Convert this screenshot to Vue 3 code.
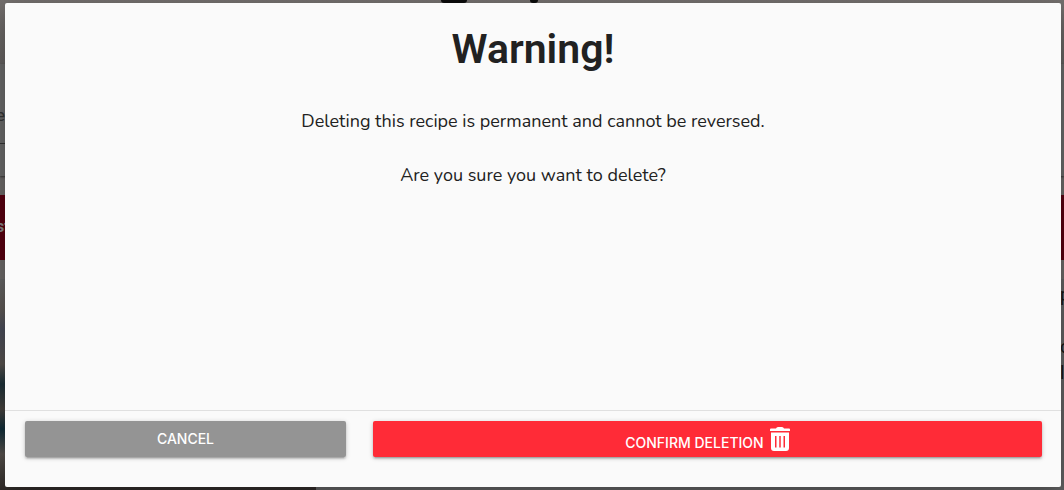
<script setup>
const title = 'Warning!'
</script>

<template>
  <div class="screen">
    <div class="page" aria-hidden="true">
      <header class="masthead">
        <span class="ink wide"></span>
        <span class="ink dot"></span>
      </header>
      <div class="search"><span>e</span></div>
      <div class="banner"><span>st</span></div>
      <div class="recipe">
        <div class="photo"></div>
        <div class="details">
          <div class="lines"><span>p</span><span class="later">c</span><span>l</span></div>
        </div>
      </div>
    </div>

    <div class="modal" role="dialog" aria-modal="true" aria-labelledby="modal-title">
      <div class="content">
        <h1 id="modal-title">{{ title }}</h1>
        <p>Deleting this recipe is permanent and cannot be reversed.</p>
        <p>Are you sure you want to delete?</p>
      </div>
      <footer class="actions">
        <button class="btn cancel" type="button">Cancel</button>
        <button class="btn confirm" type="button">
          <span>Confirm Deletion</span>
          <svg class="trash" viewBox="0 0 20 24" aria-hidden="true">
            <path fill="#fff" fill-rule="evenodd" d="M1 1.500h5Q6.500 0 8 0h4q1.500 0 2 1.500h5q1 0 1 1V4H0V2.500q0-1 1-1zM1 5.500h18V21q0 3-3 3H4q-3 0-3-3zM5 9v11.500h1.500V9zm4.250 0v11.500h1.500V9zm4.250 0v11.500H15V9z" />
          </svg>
        </button>
      </footer>
    </div>
  </div>
</template>

<style>
body {
  margin: 0;
}
</style>

<style scoped>
.screen {
  position: relative;
  box-sizing: border-box;
  display: flex;
  min-height: 100vh;
  padding: 3px 3px 3px 5px;
  overflow: hidden;
  font-family: Roboto, "Liberation Sans", sans-serif;
  color: #212121;
}

.page {
  position: absolute;
  inset: 0;
  display: flex;
  flex-direction: column;
  background: #6b6867;
}

.masthead {
  display: flex;
  align-items: flex-start;
  justify-content: center;
  gap: 63px;
  height: 64px;
  padding-right: 86px;
  background: linear-gradient(#736f6d, #63605f);
}

.ink {
  height: 3px;
  background: #0b0b0b;
  border-radius: 0 0 4px 4px;
}

.wide {
  width: 26px;
}

.dot {
  width: 8px;
}

.search {
  box-sizing: border-box;
  height: 112px;
  padding-top: 41px;
  font-size: 17px;
  line-height: 20px;
  color: #333;
  background: linear-gradient(90deg, #333 316px, transparent 316px) 0 79px / 100% 1px no-repeat #686868;
  box-shadow: 0 1px 2px #333;
}

.search span,
.banner span {
  margin-left: -4px;
}

.banner {
  box-sizing: border-box;
  height: 65px;
  margin-top: 19px;
  padding-top: 22px;
  font-size: 16px;
  line-height: 20px;
  font-weight: 700;
  color: #858585;
  background: #570010;
}

.recipe {
  flex: 1;
  display: flex;
  padding-top: 19px;
}

.photo {
  width: 316px;
  background: linear-gradient(#646464, #5c5754 30px, #484b58 50px, #55504d 85px, #1c3037 105px, #45413d 130px, #102c38 150px, #55504c 175px, #302b29);
}

.details {
  flex: 1;
  padding-top: 3px;
  font-size: 18px;
  line-height: 26px;
  color: #151515;
  background: #626263;
}

.lines {
  display: flex;
  flex-direction: column;
  width: 4px;
  margin-left: auto;
}

.later {
  margin-top: 26px;
}

.modal {
  position: relative;
  flex: 1;
  display: flex;
  flex-direction: column;
  background: #fafafa;
  border-radius: 2px;
  box-shadow: 0 8px 24px rgba(0, 0, 0, 0.3);
}

.content {
  flex: 1;
  padding: 20px 24px;
  text-align: center;
}

h1 {
  margin: 0 0 33px;
  font-size: 41px;
  line-height: 52px;
  font-weight: 600;
}

p {
  margin: 0 0 27px;
  font-family: Nunito, Lato, "Open Sans", sans-serif;
  font-size: 18px;
  line-height: 27px;
}

.actions {
  display: flex;
  align-items: flex-start;
  gap: 27px;
  padding: 10px 19px 30px 20px;
  border-top: 1px solid #e0e0e0;
}

.btn {
  display: flex;
  align-items: center;
  justify-content: center;
  box-sizing: border-box;
  height: 36px;
  padding: 0;
  border: 0;
  border-radius: 2px;
  font-family: Inter, Roboto, sans-serif;
  font-size: 14px;
  font-weight: 500;
  line-height: 36px;
  text-transform: uppercase;
  color: #fff;
  box-shadow: 0 2px 2px rgba(0, 0, 0, 0.14), 0 3px 1px -2px rgba(0, 0, 0, 0.12), 0 1px 5px rgba(0, 0, 0, 0.2);
  cursor: pointer;
}

.cancel {
  flex: 321 1 0;
  background: #949494;
}

.confirm {
  flex: 669 1 0;
  gap: 6px;
  background: #ff2b37;
}

.confirm span {
  padding-top: 7px;
}

.trash {
  width: 20px;
  height: 24px;
}
</style>
